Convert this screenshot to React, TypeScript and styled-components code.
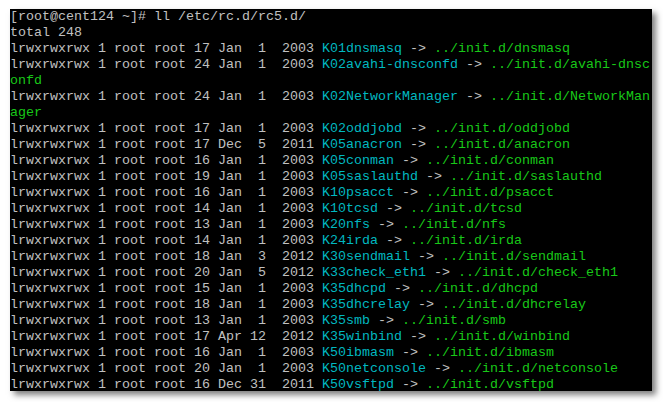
import React from "react";
import styled, { createGlobalStyle } from "styled-components";

const Global = createGlobalStyle`
  html, body {
    margin: 0;
    padding: 0;
    background: #ffffff;
  }
`;

const Page = styled.div`
  width: 663px;
  height: 402px;
  padding: 9px 0 0 10px;
  box-sizing: border-box;
  background: #ffffff;
  overflow: hidden;
`;

const Terminal = styled.div`
  width: 642px;
  height: 382px;
  background: #000000;
  box-shadow: 4px 4px 6px rgba(0, 0, 0, 0.5);
  overflow: hidden;
  font-family: "Liberation Mono", "Courier New", monospace;
  font-size: 13.333px;
  line-height: 16px;
  color: #c0c0c0;
`;

const Line = styled.div`
  height: 16px;
  white-space: pre;
`;

const Name = styled.span`
  color: #00b8c0;
`;

const Target = styled.span`
  color: #18c818;
`;

type Entry = {
  size: string;
  date: string;
  name: string;
  target: string;
};

const entries: Entry[] = [
  { size: "17", date: "Jan  1  2003", name: "K01dnsmasq", target: "dnsmasq" },
  { size: "24", date: "Jan  1  2003", name: "K02avahi-dnsconfd", target: "avahi-dnsconfd" },
  { size: "24", date: "Jan  1  2003", name: "K02NetworkManager", target: "NetworkManager" },
  { size: "17", date: "Jan  1  2003", name: "K02oddjobd", target: "oddjobd" },
  { size: "17", date: "Dec  5  2011", name: "K05anacron", target: "anacron" },
  { size: "16", date: "Jan  1  2003", name: "K05conman", target: "conman" },
  { size: "19", date: "Jan  1  2003", name: "K05saslauthd", target: "saslauthd" },
  { size: "16", date: "Jan  1  2003", name: "K10psacct", target: "psacct" },
  { size: "14", date: "Jan  1  2003", name: "K10tcsd", target: "tcsd" },
  { size: "13", date: "Jan  1  2003", name: "K20nfs", target: "nfs" },
  { size: "14", date: "Jan  1  2003", name: "K24irda", target: "irda" },
  { size: "18", date: "Jan  3  2012", name: "K30sendmail", target: "sendmail" },
  { size: "20", date: "Jan  5  2012", name: "K33check_eth1", target: "check_eth1" },
  { size: "15", date: "Jan  1  2003", name: "K35dhcpd", target: "dhcpd" },
  { size: "18", date: "Jan  1  2003", name: "K35dhcrelay", target: "dhcrelay" },
  { size: "13", date: "Jan  1  2003", name: "K35smb", target: "smb" },
  { size: "17", date: "Apr 12  2012", name: "K35winbind", target: "winbind" },
  { size: "16", date: "Jan  1  2003", name: "K50ibmasm", target: "ibmasm" },
  { size: "20", date: "Jan  1  2003", name: "K50netconsole", target: "netconsole" },
  { size: "16", date: "Dec 31  2011", name: "K50vsftpd", target: "vsftpd" },
];

const COLS = 80;

function EntryLines({ e }: { e: Entry }) {
  const prefix = `lrwxrwxrwx 1 root root ${e.size} ${e.date} `;
  const arrow = " -> ";
  const target = `../init.d/${e.target}`;
  const used = prefix.length + e.name.length + arrow.length;
  const room = COLS - used;
  if (target.length <= room) {
    return (
      <Line>
        {prefix}
        <Name>{e.name}</Name>
        {arrow}
        <Target>{target}</Target>
      </Line>
    );
  }
  return (
    <>
      <Line>
        {prefix}
        <Name>{e.name}</Name>
        {arrow}
        <Target>{target.slice(0, room)}</Target>
      </Line>
      <Line>
        <Target>{target.slice(room)}</Target>
      </Line>
    </>
  );
}

export default function App() {
  return (
    <>
      <Global />
      <Page>
        <Terminal>
          <Line>[root@cent124 ~]# ll /etc/rc.d/rc5.d/</Line>
          <Line>total 248</Line>
          {entries.map((e) => (
            <EntryLines key={e.name} e={e} />
          ))}
        </Terminal>
      </Page>
    </>
  );
}
